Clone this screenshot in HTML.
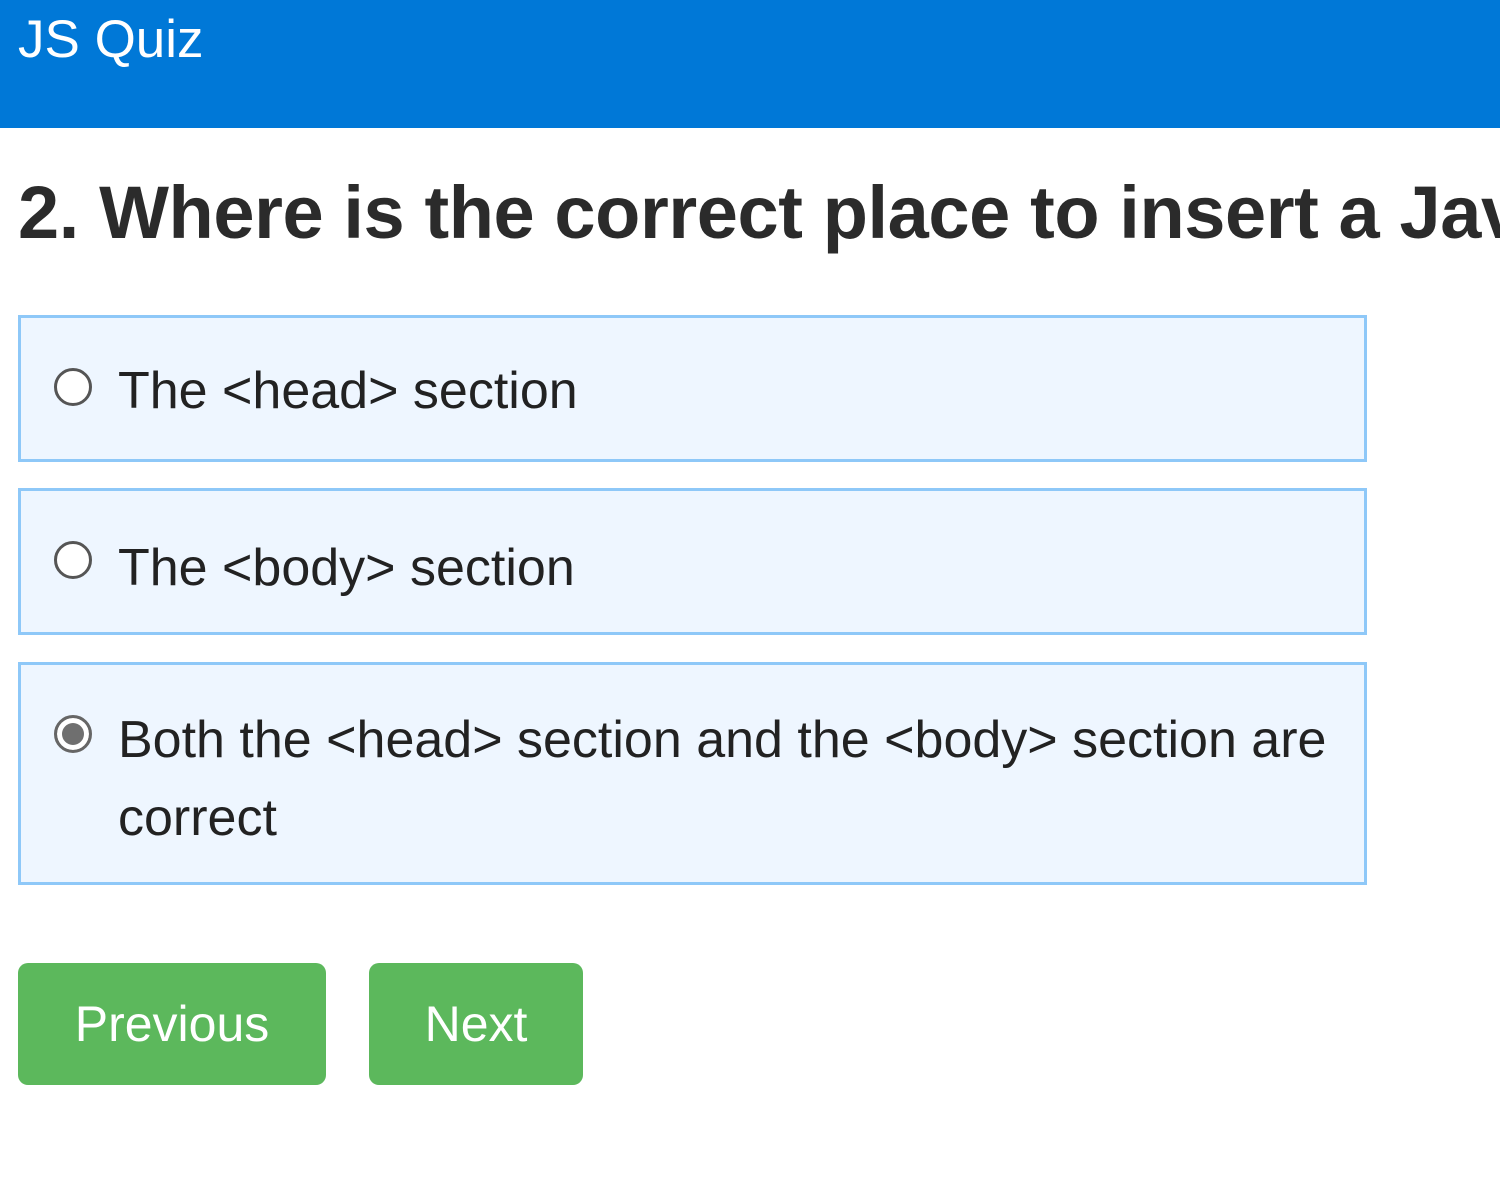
<!DOCTYPE html>
<html><head><meta charset="utf-8"><style>
*{margin:0;padding:0;box-sizing:border-box}
html,body{width:1500px;height:1200px;overflow:hidden}
body{background:#fff;font-family:"Liberation Sans",sans-serif;color:#333;position:relative}
.hdr{position:absolute;left:0;top:0;width:1500px;height:128px;background:#0078d7}
.hdr span{position:absolute;left:18px;top:8px;font-size:53px;color:#fff;line-height:64px}
.hw{position:absolute;left:0;top:168px;width:1500px;height:100px;overflow:hidden}
h1{position:absolute;left:18px;top:0;font-size:74px;font-weight:bold;white-space:nowrap;color:#2b2b2b;line-height:90px;letter-spacing:-0.4px}
.opt{position:absolute;left:18px;width:1349px;background:#eef6ff;border:3px solid #8ec8f8}
.opt .t{position:absolute;left:97px;font-size:52px;color:#222;line-height:78px;white-space:nowrap}
.r{position:absolute;left:33px;width:38px;height:38px;border-radius:50%;border:3px solid #555;background:#fff}
.r.on{border:3px solid #666;box-shadow:inset 0 0 0 5px #fff;background:#6f6f6f}
.btn{position:absolute;top:963px;height:122px;background:#5cb85c;border-radius:10px;color:#fff;font-size:50px;line-height:122px;text-align:center}
</style></head><body>
<div class="hdr"><span>JS Quiz</span></div>
<div class="hw"><h1>2. Where is the correct place to insert a JavaScript?</h1></div>
<div class="opt" style="top:315px;height:147px"><div class="r" style="top:50px"></div><div class="t" style="top:34px">The &lt;head&gt; section</div></div>
<div class="opt" style="top:488px;height:147px"><div class="r" style="top:50px"></div><div class="t" style="top:38px">The &lt;body&gt; section</div></div>
<div class="opt" style="top:662px;height:223px"><div class="r on" style="top:50px"></div><div class="t" style="top:36px">Both the &lt;head&gt; section and the &lt;body&gt; section are<br>correct</div></div>
<div class="btn" style="left:18px;width:308px">Previous</div>
<div class="btn" style="left:369px;width:214px">Next</div>
</body></html>
